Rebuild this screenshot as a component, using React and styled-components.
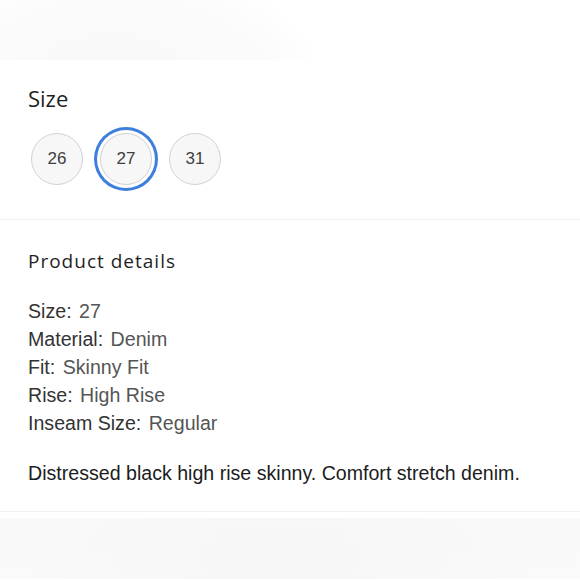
import React from "react";
import styled, { createGlobalStyle } from "styled-components";

const Global = createGlobalStyle`
  html, body { margin: 0; padding: 0; background: #ffffff; }
  body { width: 580px; height: 580px; overflow: hidden; }
`;

const Page = styled.div`
  width: 580px;
  display: flex;
  flex-direction: column;
  background: #fff;
`;

const TopBand = styled.div`
  height: 60px;
  background:
    radial-gradient(ellipse 130px 60px at 110px 70px, #f8f8fa 0%, rgba(251,251,252,0) 100%),
    radial-gradient(ellipse 200px 110px at 120px 75px, #fbfbfc 0%, #fbfbfc 75%, rgba(255,255,255,0) 100%);
`;

const Section = styled.section`
  padding: ${(p) => p.$pad};
  border-bottom: 1px solid #efefef;
`;

const SectionTitle = styled.h2`
  margin: 0;
  font-family: "Open Sans", "Noto Sans", sans-serif;
  font-weight: 400;
  font-size: ${(p) => p.$size}px;
  line-height: ${(p) => p.$lh}px;
  letter-spacing: ${(p) => p.$ls}px;
  color: #1f1f1f;
`;

const Options = styled.div`
  display: flex;
  gap: 17px;
  margin-top: 21px;
  padding-left: 3px;
`;

const SizeButton = styled.button`
  width: 52px;
  height: 52px;
  border-radius: 50%;
  border: 1px solid #d2d2d2;
  background: #f7f7f7;
  color: #404040;
  font-family: "Liberation Sans", Arial, sans-serif;
  font-size: 17px;
  padding: 0;
  display: flex;
  align-items: center;
  justify-content: center;
  cursor: pointer;
  box-shadow: ${(p) =>
    p.$selected ? "0 0 0 3px #ffffff, 0 0 0 6px #3d7fdc" : "none"};
`;

const DetailList = styled.ul`
  list-style: none;
  margin: 24px 0 0;
  padding: 0;
`;

const DetailItem = styled.li`
  font-family: "Liberation Sans", Arial, sans-serif;
  font-size: 19.6px;
  line-height: 28px;
  color: #333333;
`;

const Value = styled.span`
  margin-left: 2px;
  color: #555555;
`;

const Description = styled.p`
  margin: 22px 0 0;
  font-family: "Liberation Sans", Arial, sans-serif;
  font-size: 19.6px;
  line-height: 28px;
  color: #1c1c1c;
`;

const Spacer = styled.div`
  height: 6px;
  background: #ffffff;
`;

const BottomBand = styled.div`
  height: 61px;
  background:
    radial-gradient(ellipse 260px 80px at 280px 40px, #f6f6f6 0%, rgba(249,249,249,0) 100%),
    linear-gradient(180deg, #f9f9f9 0%, #fafafa 100%);
`;

const sizes = ["26", "27", "31"];
const details = [
  ["Size", "27"],
  ["Material", "Denim"],
  ["Fit", "Skinny Fit"],
  ["Rise", "High Rise"],
  ["Inseam Size", "Regular"],
];

export default function App() {
  return (
    <Page>
      <Global />
      <TopBand />
      <Section $pad="24px 28px 34px">
        <SectionTitle $size={22} $lh={28} $ls={0}>Size</SectionTitle>
        <Options>
          {sizes.map((s) => (
            <SizeButton key={s} $selected={s === "27"}>
              {s}
            </SizeButton>
          ))}
        </Options>
      </Section>
      <Section $pad="29px 28px 24px">
        <SectionTitle $size={19} $lh={24} $ls={1}>Product details</SectionTitle>
        <DetailList>
          {details.map(([k, v]) => (
            <DetailItem key={k}>
              {k}: <Value>{v}</Value>
            </DetailItem>
          ))}
        </DetailList>
        <Description>
          Distressed black high rise skinny. Comfort stretch denim.
        </Description>
      </Section>
      <Spacer />
      <BottomBand />
    </Page>
  );
}
